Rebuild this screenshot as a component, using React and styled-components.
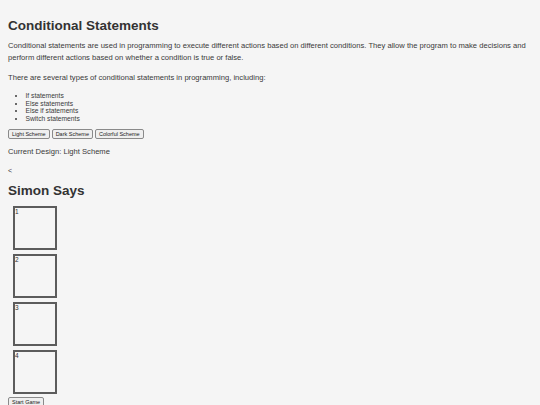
import React from "react";
import styled, { createGlobalStyle } from "styled-components";

const Global = createGlobalStyle`
  html, body { margin: 0; padding: 0; }
  body {
    background: #f5f5f5;
    color: #333;
    font-family: "Liberation Sans", Arial, sans-serif;
    padding: 8px;
  }
`;

const Page = styled.div`
  display: flex;
  flex-direction: column;
  align-items: flex-start;
`;

const Title = styled.h1`
  font-size: 13.5px;
  font-weight: bold;
  margin: 10px 0 6px;
  line-height: 16px;
`;

const Para = styled.p`
  font-size: 7.62px;
  line-height: 12px;
  margin: 0 0 ${(p) => p.$gap ?? 8}px;
  color: #3a3a3a;
`;

const List = styled.ul`
  margin: 0 0 7px;
  padding-left: 17.5px;
  font-size: 6.7px;
  line-height: 7.5px;
  color: #3a3a3a;
`;

const ButtonRow = styled.div`
  display: flex;
  gap: 2px;
  margin-bottom: 7px;
`;

const Btn = styled.button`
  font-family: "Liberation Sans", Arial, sans-serif;
  font-size: 5.5px;
  line-height: 7px;
  padding: 0.5px 3px;
  background: #efefef;
  color: #222;
  border: 1px solid #8a8a8a;
  border-radius: 2px;
`;

const Back = styled.div`
  font-size: 7px;
  margin: 0 0 6px;
  line-height: 12px;
  color: #3a3a3a;
`;

const SubTitle = styled.h2`
  font-size: 13.5px;
  font-weight: bold;
  margin: 0 0 7px;
  line-height: 16px;
`;

const Board = styled.div`
  display: flex;
  flex-direction: column;
  gap: 4px;
  padding-left: 5px;
  margin-bottom: 3px;
`;

const Pad = styled.div`
  width: 40px;
  height: 40px;
  border: 2px solid #5c5c5c;
  background: #f5f5f5;
  font-size: 6.5px;
  line-height: 7px;
  color: #333;
`;

export default function App() {
  return (
    <Page>
      <Global />
      <Title>Conditional Statements</Title>
      <Para>
        Conditional statements are used in programming to execute different actions based on different conditions. They allow the program to make decisions and perform different actions based on whether a condition is true or false.
      </Para>
      <Para>There are several types of conditional statements in programming, including:</Para>
      <List>
        <li>If statements</li>
        <li>Else statements</li>
        <li>Else if statements</li>
        <li>Switch statements</li>
      </List>
      <ButtonRow>
        <Btn>Light Scheme</Btn>
        <Btn>Dark Scheme</Btn>
        <Btn>Colorful Scheme</Btn>
      </ButtonRow>
      <Para $gap={7}>Current Design: Light Scheme</Para>
      <Back>&lt;</Back>
      <SubTitle>Simon Says</SubTitle>
      <Board>
        <Pad>1</Pad>
        <Pad>2</Pad>
        <Pad>3</Pad>
        <Pad>4</Pad>
      </Board>
      <Btn>Start Game</Btn>
    </Page>
  );
}
